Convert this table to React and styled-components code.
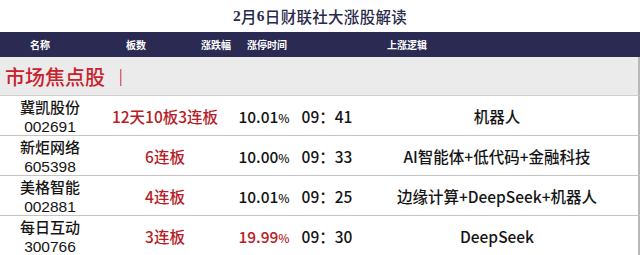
import React from "react";
import styled, { createGlobalStyle } from "styled-components";

const GlobalStyle = createGlobalStyle`
  html, body {
    margin: 0;
    padding: 0;
    background: #ffffff;
  }
  body {
    font-family: "Noto Sans CJK SC", "DejaVu Sans", sans-serif;
  }
`;

const Page = styled.div`
  width: 640px;
  height: 255px;
  overflow: hidden;
  background: #ffffff;
`;

const Title = styled.div`
  height: 32px;
  display: flex;
  align-items: center;
  justify-content: center;
  font-family: "Liberation Serif", "Noto Sans CJK SC", serif;
  font-size: 15.5px;
  font-weight: 500;
  color: #2a2a4a;
  letter-spacing: 0.3px;

  b {
    font-weight: 700;
  }
`;

const HeaderBar = styled.div`
  height: 25px;
  background: #2a2a52;
  display: grid;
  grid-template-columns: 80px 112px 48px 54px 226px 1fr;
  align-items: center;
  color: #ffffff;
  font-size: 10px;
  font-weight: 700;
`;

const HeadCell = styled.div`
  text-align: center;
`;

const Section = styled.div`
  height: 38px;
  background: #ebebeb;
  border-bottom: 1px solid #cfcfcf;
  border-right: 2px solid #b8b8b8;
  display: flex;
  align-items: center;
  padding-left: 5px;
  font-family: "Liberation Serif", "Noto Sans CJK SC", serif;
  font-size: 20px;
  font-weight: 500;
  color: #c8232c;

  span {
    margin-left: 14px;
    font-size: 18px;
    font-weight: 400;
  }
`;

const Row = styled.div`
  height: 39px;
  display: grid;
  grid-template-columns: 100px 130px 68px 58px 1fr;
  align-items: center;
  border-bottom: 1px solid #c4c4c4;
  border-right: 2px solid #b8b8b8;
  color: #151515;
  font-size: 15.5px;
  font-weight: 500;
`;

const NameCell = styled.div`
  display: flex;
  flex-direction: column;
  align-items: center;
`;

const StockName = styled.div`
  font-size: 15px;
  line-height: 22px;
`;

const StockCode = styled.div`
  font-family: "Liberation Sans", "Noto Sans CJK SC", sans-serif;
  font-size: 15.5px;
  font-weight: 400;
  line-height: 17px;
`;

const Cell = styled.div`
  text-align: center;
  color: ${(p) => (p.$red ? "#b81d27" : "#151515")};
  white-space: nowrap;
`;

const Pct = styled.small`
  font-size: 12px;
`;

const rows = [
  { name: "冀凯股份", code: "002691", board: "12天10板3连板", pct: "10.01", time: "09：41", logic: "机器人" },
  { name: "新炬网络", code: "605398", board: "6连板", pct: "10.00", time: "09：33", logic: "AI智能体+低代码+金融科技" },
  { name: "美格智能", code: "002881", board: "4连板", pct: "10.01", time: "09：25", logic: "边缘计算+DeepSeek+机器人" },
  { name: "每日互动", code: "300766", board: "3连板", pct: "19.99", time: "09：30", logic: "DeepSeek", redPct: true },
];

export default function App() {
  return (
    <Page>
      <GlobalStyle />
      <Title>
        <b>2</b>月<b>6</b>日财联社大涨股解读
      </Title>
      <HeaderBar>
        <HeadCell>名称</HeadCell>
        <HeadCell>板数</HeadCell>
        <HeadCell>涨跌幅</HeadCell>
        <HeadCell>涨停时间</HeadCell>
        <HeadCell>上涨逻辑</HeadCell>
        <HeadCell />
      </HeaderBar>
      <Section>
        市场焦点股<span>|</span>
      </Section>
      {rows.map((r) => (
        <Row key={r.code}>
          <NameCell>
            <StockName>{r.name}</StockName>
            <StockCode>{r.code}</StockCode>
          </NameCell>
          <Cell $red>{r.board}</Cell>
          <Cell $red={r.redPct}>
            {r.pct}
            <Pct>%</Pct>
          </Cell>
          <Cell>{r.time}</Cell>
          <Cell>{r.logic}</Cell>
        </Row>
      ))}
    </Page>
  );
}
